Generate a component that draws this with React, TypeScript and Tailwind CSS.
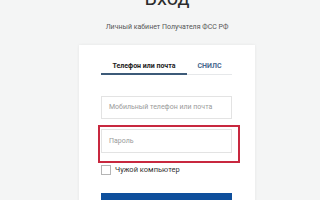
import React from "react";

export default function App() {
  return (
    <div
      className="relative w-[320px] h-[200px] overflow-hidden bg-[#f4f5f5] flex flex-col items-center pl-[14px]"
      style={{ fontFamily: "Roboto, 'Liberation Sans', sans-serif" }}
    >
      <h1 className="mt-[-12px] text-[20px] leading-[20px] text-[#2b2b2b] font-normal">Вход</h1>
      <p className="mt-[14px] text-[7px] leading-[10px] text-[#555]">Личный кабинет Получателя ФСС РФ</p>
      <div className="mt-[13px] w-[176px] flex-1 bg-white shadow-[0_0_3px_rgba(0,0,0,0.07)] pt-[16px] px-[22px] flex flex-col">
        <div className="flex w-[131px]">
          <div className="w-[86px] h-[14px] flex items-start justify-center border-b-2 border-[#3c5a78]">
            <span className="text-[7px] leading-[10px] font-bold text-[#222]">Телефон или почта</span>
          </div>
          <div className="w-[45px] h-[14px] flex items-start justify-center border-b border-[#e6e8ea]">
            <span className="text-[7px] leading-[10px] font-bold text-[#46688d]">СНИЛС</span>
          </div>
        </div>
        <div className="mt-[21px] w-[131px] h-[23px] border border-[#e3e3e3] flex items-center pl-[7px]">
          <span className="text-[7px] text-[#9a9a9a]">Мобильный телефон или почта</span>
        </div>
        <div className="mt-[10px] w-[131px] h-[24px] border border-[#e3e3e3] flex items-center pl-[7px]">
          <span className="text-[7px] text-[#9a9a9a]">Пароль</span>
        </div>
        <div className="mt-[12px] flex items-center gap-[4px]">
          <div className="w-[10px] h-[10px] border border-[#b5b5b5] bg-white"></div>
          <span className="text-[7.5px] leading-[10px] text-[#333]">Чужой компьютер</span>
        </div>
        <div className="mt-[18px] w-[131px] h-[20px] bg-[#0e4f9c]"></div>
      </div>
      <div className="absolute left-[98px] top-[125px] w-[142px] h-[38px] border-2 border-[#c8283f]"></div>
    </div>
  );
}
